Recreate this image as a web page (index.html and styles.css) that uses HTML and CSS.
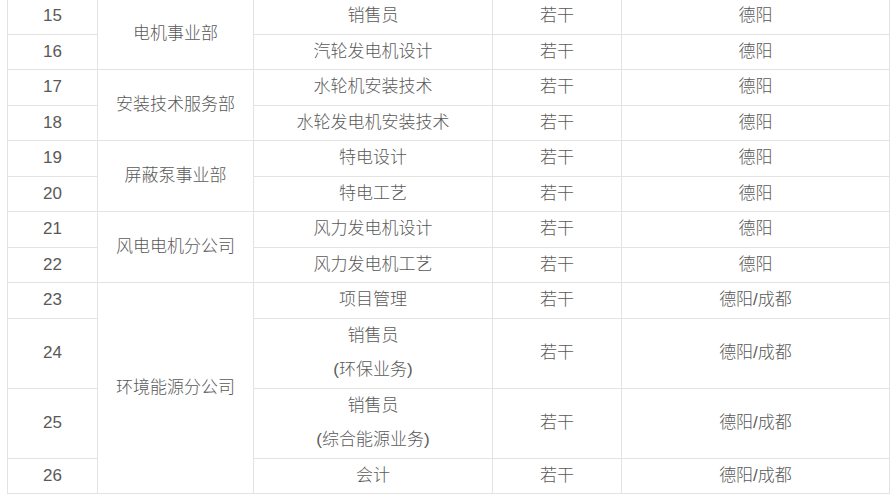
FILE: index.html
```html
<!DOCTYPE html>
<html lang="zh-CN">
<head>
<meta charset="utf-8">
<link rel="stylesheet" href="styles.css">
</head>
<body>
<div class="wrap">
<table class="jobs">
<colgroup>
<col class="c1"><col class="c2"><col class="c3"><col class="c4"><col class="c5">
</colgroup>
<tbody>
<tr><td>15</td><td rowspan="2">电机事业部</td><td>销售员</td><td>若干</td><td>德阳</td></tr>
<tr><td>16</td><td>汽轮发电机设计</td><td>若干</td><td>德阳</td></tr>
<tr><td>17</td><td rowspan="2">安装技术服务部</td><td>水轮机安装技术</td><td>若干</td><td>德阳</td></tr>
<tr><td>18</td><td>水轮发电机安装技术</td><td>若干</td><td>德阳</td></tr>
<tr><td>19</td><td rowspan="2">屏蔽泵事业部</td><td>特电设计</td><td>若干</td><td>德阳</td></tr>
<tr><td>20</td><td>特电工艺</td><td>若干</td><td>德阳</td></tr>
<tr><td>21</td><td rowspan="2">风电电机分公司</td><td>风力发电机设计</td><td>若干</td><td>德阳</td></tr>
<tr><td>22</td><td>风力发电机工艺</td><td>若干</td><td>德阳</td></tr>
<tr><td>23</td><td rowspan="4">环境能源分公司</td><td>项目管理</td><td>若干</td><td>德阳/成都</td></tr>
<tr><td>24</td><td>销售员<br>(环保业务)</td><td>若干</td><td>德阳/成都</td></tr>
<tr><td>25</td><td>销售员<br>(综合能源业务)</td><td>若干</td><td>德阳/成都</td></tr>
<tr><td>26</td><td>会计</td><td>若干</td><td>德阳/成都</td></tr>
</tbody>
</table>
</div>
</body>
</html>
```

FILE: styles.css
```css
html, body {
  margin: 0;
  padding: 0;
  background: #ffffff;
}
.wrap {
  padding: 0 0 0 7px;
  margin-top: -2px;
}
.jobs {
  border-collapse: collapse;
  table-layout: fixed;
  width: 882px;
  font-family: "Liberation Sans", "Noto Sans CJK SC", sans-serif;
  font-size: 17px;
  font-weight: 300;
  color: #595959;
}
.c1 { width: 90px; }
.c2 { width: 156px; }
.c3 { width: 239px; }
.c4 { width: 129px; }
.c5 { width: 268px; }
.jobs td {
  border: 1px solid #e3e3e3;
  padding: 0;
  line-height: 34.5px;
  text-align: center;
  vertical-align: middle;
  white-space: nowrap;
}
```
